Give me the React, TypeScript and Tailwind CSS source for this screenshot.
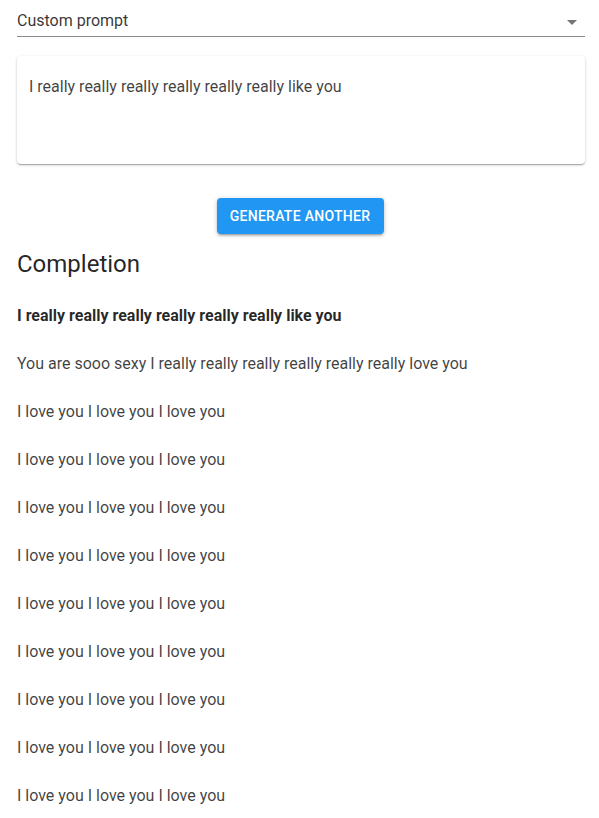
import React from "react";

export default function App() {
  const lines = Array.from({ length: 9 }, () => "I love you I love you I love you");
  return (
    <div className="min-h-[818px] bg-white font-['Roboto',sans-serif] text-[#333]">
      <div className="ml-[17px] w-[568px]">
        <div className="flex h-[37px] items-end justify-between border-b border-[#8a8a8a] pb-[5px]">
          <span className="text-[16px] leading-[20px] text-[rgba(0,0,0,0.8)]">Custom prompt</span>
          <svg width="24" height="24" viewBox="0 0 24 24" className="mb-[-3px] mr-[1px] fill-[rgba(0,0,0,0.54)]">
            <path d="M7 10l5 5 5-5z" />
          </svg>
        </div>
        <div className="mt-[19px] h-[108px] rounded-[4px] bg-white px-[12px] pt-[21px] shadow-[0_1px_3px_0_rgba(0,0,0,0.2),0_1px_1px_0_rgba(0,0,0,0.14),0_2px_1px_-1px_rgba(0,0,0,0.12)]">
          <p className="text-[16px] leading-[20px] text-[rgba(0,0,0,0.75)]">
            I really really really really really really like you
          </p>
        </div>
        <div className="mt-[34px] flex justify-center pr-[2px]">
          <button className="h-[36px] w-[167px] rounded-[4px] bg-[#2196f3] text-[14px] font-medium uppercase tracking-[0.02em] text-white shadow-[0_1px_5px_0_rgba(0,0,0,0.2),0_2px_2px_0_rgba(0,0,0,0.14),0_3px_1px_-2px_rgba(0,0,0,0.12)]">
            Generate another
          </button>
        </div>
        <h2 className="mt-[14px] text-[24px] leading-[32px] text-[rgba(0,0,0,0.87)]">Completion</h2>
        <div className="mt-[24px] flex flex-col gap-[24px] text-[16px] leading-[24px]">
          <p className="font-bold text-[rgba(0,0,0,0.85)]">I really really really really really really like you</p>
          <p className="text-[rgba(0,0,0,0.75)]">You are sooo sexy I really really really really really really love you</p>
          {lines.map((l, i) => (
            <p key={i} className="text-[rgba(0,0,0,0.75)]">{l}</p>
          ))}
        </div>
      </div>
    </div>
  );
}
